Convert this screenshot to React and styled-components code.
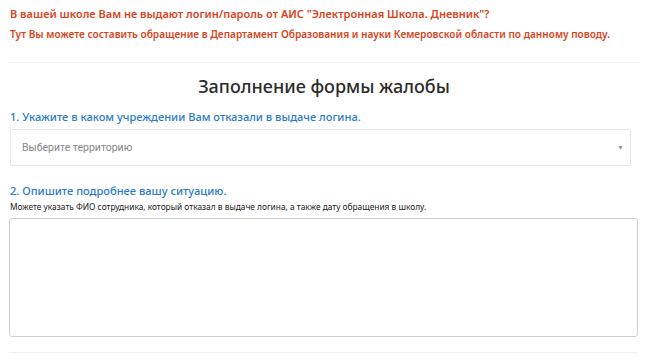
import styled, { createGlobalStyle } from "styled-components";

const GlobalStyle = createGlobalStyle`
  body {
    margin: 0;
    background: #fff;
    font-family: "Open Sans", "Noto Sans", sans-serif;
  }
  * { box-sizing: border-box; }
`;

const Page = styled.div`
  padding: 0 8px 0 10px;
`;

const Notice = styled.p`
  margin: 0;
  color: #d8441c;
  font-family: "Noto Sans", sans-serif;
  font-weight: 600;
  font-size: ${(p) => (p.$small ? "10.1px" : "11px")};
  line-height: ${(p) => (p.$small ? "16px" : "18px")};
  padding-top: ${(p) => (p.$small ? "3px" : "5px")};
`;

const Rule = styled.hr`
  border: 0;
  border-top: 1px solid #f0f0f0;
  margin: ${(p) => p.$margin};
`;

const Title = styled.h2`
  margin: 11px 0 0;
  text-align: center;
  font-family: "Noto Sans", sans-serif;
  font-weight: 500;
  font-size: 18px;
  line-height: 24px;
  color: #2b2b2b;
`;

const Label = styled.label`
  display: block;
  color: #2a7ac6;
  font-family: "Noto Sans", sans-serif;
  font-weight: 500;
  font-size: 11.1px;
  line-height: 16px;
  margin: ${(p) => p.$margin};
`;

const Hint = styled.div`
  font-family: "Noto Sans", sans-serif;
  font-size: 8.35px;
  line-height: 12px;
  color: #222;
  margin: 2px 0 5px;
`;

const SelectBox = styled.div`
  width: 621px;
  height: 37px;
  border: 1px solid #e6e6e6;
  border-radius: 2px;
  display: flex;
  align-items: center;
  justify-content: space-between;
  padding: 0 6px 0 11px;
  font-family: Roboto, sans-serif;
  font-size: 10.5px;
  color: #858585;
`;

const Caret = styled.span`
  font-size: 7px;
  color: #999;
`;

const TextArea = styled.textarea`
  display: block;
  width: 629px;
  height: 119px;
  margin-left: -1px;
  border: 1px solid #cfcfcf;
  border-radius: 3px;
  resize: none;
  outline: none;
`;

export default function App() {
  return (
    <Page>
      <GlobalStyle />
      <Notice>В вашей школе Вам не выдают логин/пароль от АИС "Электронная Школа. Дневник"?</Notice>
      <Notice $small>Тут Вы можете составить обращение в Департамент Образования и науки Кемеровской области по данному поводу.</Notice>
      <Rule $margin="20px 0 0" />
      <Title>Заполнение формы жалобы</Title>
      <Label $margin="11px 0 4px">1. Укажите в каком учреждении Вам отказали в выдаче логина.</Label>
      <SelectBox>
        <span>Выберите территорию</span>
        <Caret>▼</Caret>
      </SelectBox>
      <Label $margin="17px 0 0">2. Опишите подробнее вашу ситуацию.</Label>
      <Hint>Можете указать ФИО сотрудника, который отказал в выдаче логина, а также дату обращения в школу.</Hint>
      <TextArea />
      <Rule $margin="15px 0 0 -1px" />
    </Page>
  );
}
